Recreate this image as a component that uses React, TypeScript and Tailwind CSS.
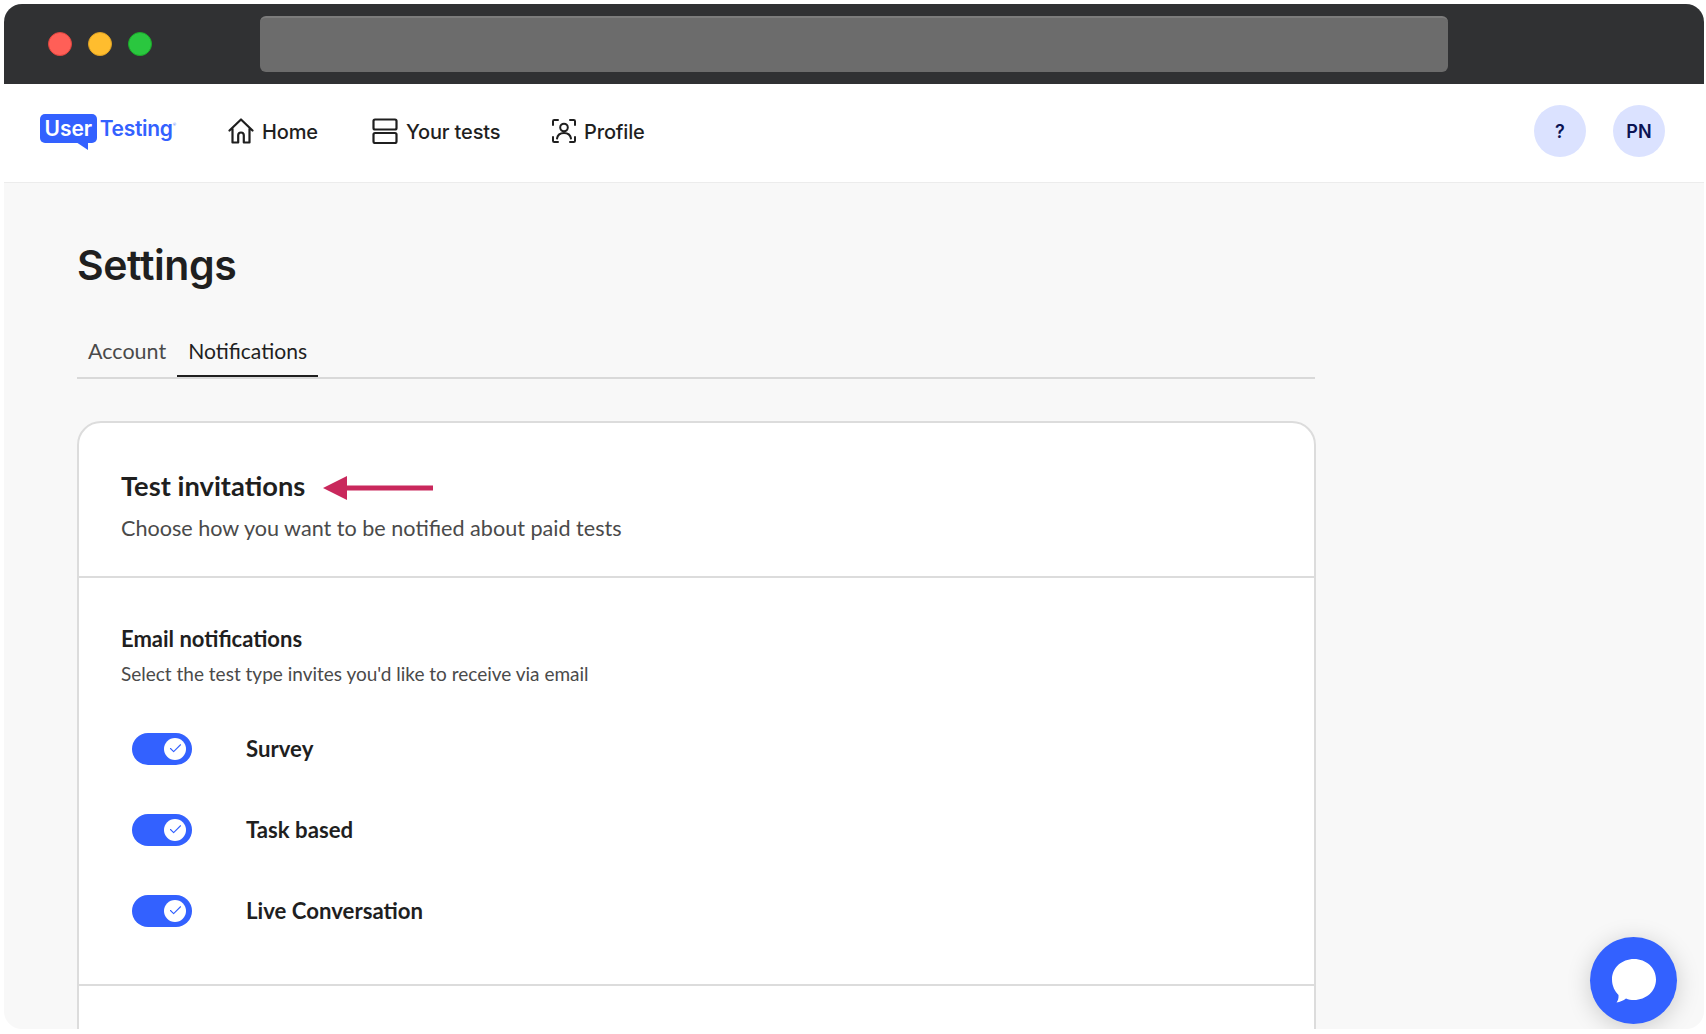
import { Check } from "lucide-react";

const body = "font-['Lato','Liberation_Sans',sans-serif]";
const head = "font-['Inter','Liberation_Sans',sans-serif]";

function HomeIcon() {
  return (
    <svg width="26" height="26" viewBox="0 0 26 26" fill="none" stroke="#1f1f1f" strokeWidth="2.2" strokeLinejoin="round" strokeLinecap="round">
      <path d="M1.5 12.5 13 1.5l11.5 11M4.5 10.5V24.5h5.7v-7.2a2.8 2.8 0 0 1 5.6 0v7.2h5.7V10.5" />
    </svg>
  );
}

function TestsIcon() {
  return (
    <svg width="26" height="26" viewBox="0 0 26 26" fill="none" stroke="#1f1f1f" strokeWidth="2.2">
      <rect x="1.5" y="1.5" width="23" height="10" rx="1.5" />
      <rect x="1.5" y="15" width="23" height="10" rx="1.5" />
    </svg>
  );
}

function ProfileIcon() {
  return (
    <svg width="24" height="24" viewBox="0 0 24 24" fill="none" stroke="#1f1f1f" strokeWidth="2" strokeLinecap="round" strokeLinejoin="round">
      <path d="M1 6V2.2C1 1.5 1.5 1 2.2 1H6M18 1h3.8c.7 0 1.2.5 1.2 1.2V6M23 18v3.8c0 .7-.5 1.2-1.2 1.2H18M6 23H2.2C1.5 23 1 22.500 1 21.800V18" />
      <circle cx="12" cy="8.500" r="3.800" />
      <path d="M5 19.500c.6-3.500 3.200-5.500 7-5.500s6.400 2 7 5.500" />
    </svg>
  );
}

function Logo() {
  return (
    <div className="mb-[5px] flex w-[136px] items-center">
      <div className={`relative flex h-[29px] w-[59px] items-center justify-center rounded-[5px] bg-[#3361ff] text-[21px] font-semibold text-white ${head}`}>
        User
        <svg className="absolute right-[9px] top-[28px]" width="12" height="8" viewBox="0 0 12 8" fill="#3361ff">
          <path d="M0 0h12v8z" />
        </svg>
      </div>
      <span className={`ml-[3px] text-[21px] font-semibold tracking-[-0.3px] text-[#3361ff] ${head}`}>Testing</span>
      <span className="mb-2 text-[4px] text-[#3361ff]">®</span>
    </div>
  );
}

function NavItem({ icon, label, width }: { icon: React.ReactNode; label: string; width: string }) {
  return (
    <div className={`flex items-center gap-[8px] ${width}`}>
      {icon}
      <span className={`mt-[2px] text-[20px] font-[550] leading-none tracking-[-0.15px] text-[#1f1f1f] ${head}`}>{label}</span>
    </div>
  );
}

function Toggle({ label }: { label: string }) {
  return (
    <div className="flex h-[81px] items-center">
      <div className="ml-[11px] flex h-[32px] w-[60px] items-center justify-end rounded-full bg-[#3361ff] pr-[6px]">
        <div className="flex h-[22px] w-[22px] items-center justify-center rounded-full bg-white">
          <Check size={15} strokeWidth={1.7} color="#3361ff" />
        </div>
      </div>
      <span className="ml-[54px] text-[22.200px] font-bold text-[#1f1f1f]">{label}</span>
    </div>
  );
}

export default function App() {
  return (
    <div className={`h-[1034px] w-[1706px] overflow-hidden bg-white pb-[5px] pl-[4px] pr-[2px] pt-[4px] ${body}`}>
      <div className="relative flex h-full flex-col overflow-hidden rounded-[18px] bg-[#f8f8f8]">
        {/* Browser chrome */}
        <div className="flex h-[80px] shrink-0 items-center bg-[#303133] pl-[44px]">
          <div className="flex gap-[16px]">
            <div className="h-[24px] w-[24px] rounded-full border border-[#e0443e] bg-[#ff5f57]" />
            <div className="h-[24px] w-[24px] rounded-full border border-[#dea123] bg-[#ffbd2e]" />
            <div className="h-[24px] w-[24px] rounded-full border border-[#1aab29] bg-[#2ac73f]" />
          </div>
          <div className="ml-[108px] h-[56px] w-[1188px] rounded-[6px] border-t-2 border-[#7c7c7c] bg-[#6c6c6c]" />
        </div>

        {/* Top nav */}
        <div className="flex h-[99px] shrink-0 items-center border-b border-[#ececec] bg-white pb-[4px] pl-[36px] pr-[39px]">
          <Logo />
          <div className="ml-[52px] flex items-center">
            <NavItem icon={<HomeIcon />} label="Home" width="w-[144px]" />
            <NavItem icon={<TestsIcon />} label="Your tests" width="w-[180px]" />
            <NavItem icon={<ProfileIcon />} label="Profile" width="" />
          </div>
          <div className="ml-auto flex gap-[27px]">
            <div className={`flex h-[52px] w-[52px] items-center justify-center rounded-full bg-[#dbe2ff] text-[18px] font-semibold text-[#0b1354] ${head}`}>?</div>
            <div className={`flex h-[52px] w-[52px] items-center justify-center rounded-full bg-[#dbe2ff] text-[18px] font-semibold text-[#0b1354] ${head}`}>PN</div>
          </div>
        </div>

        {/* Settings */}
        <div className="flex-1 pl-[73px]">
          <div className="w-[1238px]">
            <h1 className={`mt-[54px] text-[41px] font-semibold leading-[56px] tracking-[-0.4px] text-[#1f1f1f] ${head}`}>Settings</h1>
            <div className="mt-[33px] flex h-[53px] border-b-2 border-[#d9d9d9]">
              <div className="h-[51px] px-[11px] pt-[9px] text-[21.500px] text-[#4a4a4a]">Account</div>
              <div className="h-[51px] border-b-2 border-[#1f1f1f] px-[11px] pt-[9px] text-[21.100px] text-[#1f1f1f]">Notifications</div>
            </div>

            <div className="mt-[42px] h-[700px] w-[1239px] rounded-[24px] border-2 border-[#dcdcdc] bg-white">
              <div className="h-[155px] border-b-2 border-[#dcdcdc] pl-[42px] pt-[47px]">
                <div className="flex items-center">
                  <h2 className="text-[27.300px] font-bold leading-[32px] text-[#1f1f1f]">Test invitations</h2>
                  <svg className="ml-[18px] mt-[3px]" width="110" height="24" viewBox="0 0 110 24" fill="#c9285c">
                    <path d="M0 12 24 0v9.500h86v5H24V24z" />
                  </svg>
                </div>
                <p className="mt-[11px] text-[21.600px] leading-[30px] text-[#4a4a4a]">Choose how you want to be notified about paid tests</p>
              </div>
              <div className="h-[408px] border-b-2 border-[#dcdcdc] pl-[42px] pt-[47px]">
                <h3 className="text-[22px] font-bold leading-[28px] text-[#1f1f1f]">Email notifications</h3>
                <p className="mt-[8px] text-[19px] leading-[26px] text-[#4a4a4a]">Select the test type invites you'd like to receive via email</p>
                <div className="mt-[21px]">
                  <Toggle label="Survey" />
                  <Toggle label="Task based" />
                  <Toggle label="Live Conversation" />
                </div>
              </div>
            </div>
          </div>
        </div>

        {/* Chat launcher */}
        <div className="absolute bottom-[5px] right-[27px] flex h-[87px] w-[87px] items-center justify-center rounded-full bg-[#3361ff] shadow-[0_4px_24px_rgba(0,0,0,0.18)]">
          <svg width="46" height="46" viewBox="0 0 46 46" fill="white">
            <path d="M23 1c12.200 0 22 8.800 22 20.500S35.200 42 23 42c-3 0-5.500-.5-8-1.500-2.500 2-6 3.500-9.500 4 1.500-2 2.300-4.500 2-7.500C4 33.500 1 28 1 21.500 1 9.800 10.800 1 23 1z" />
          </svg>
        </div>
      </div>
    </div>
  );
}
